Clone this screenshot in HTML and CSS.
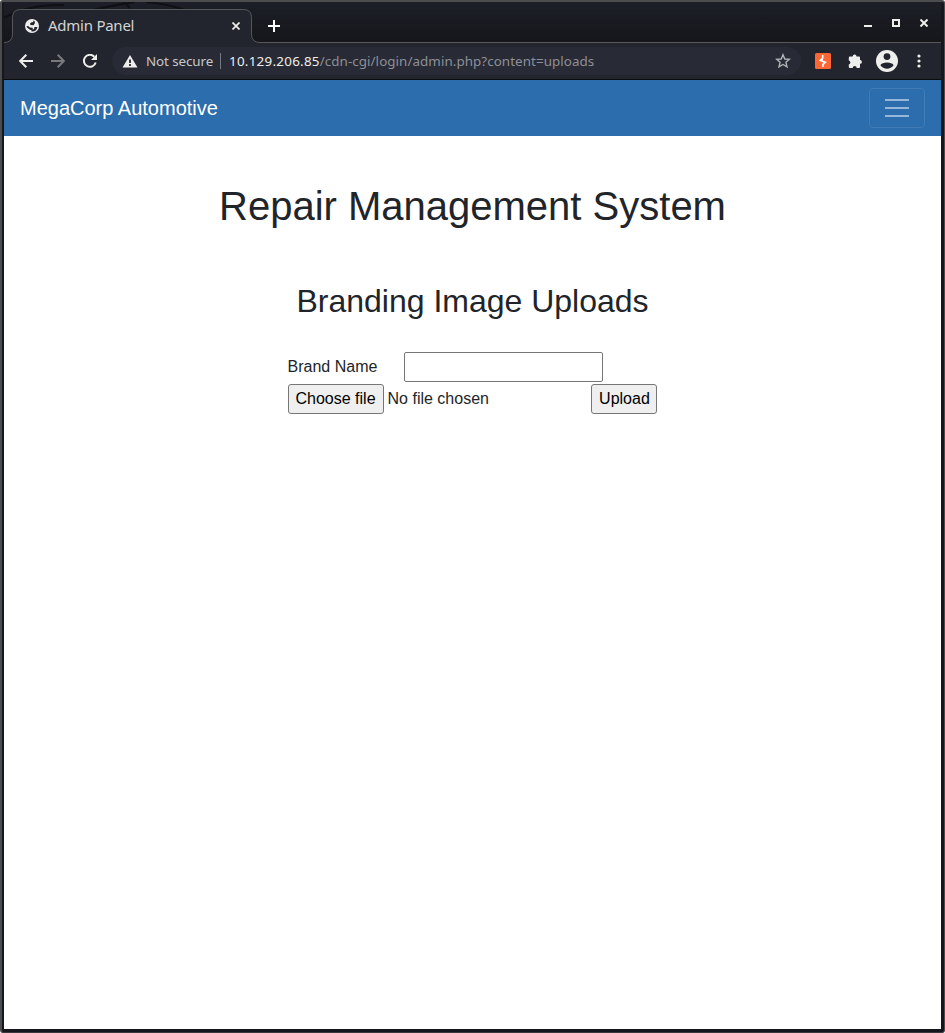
FILE: index.html
```html
<!DOCTYPE html>
<html lang="en">
<head>
<meta charset="utf-8">
<title>Admin Panel</title>
<link rel="stylesheet" href="styles.css">
</head>
<body>
<div class="window">
  <header class="tabstrip">
    <svg class="tab-shape" width="937" height="41" viewBox="0 0 937 41">
      <g fill="none" stroke="#0f1014" stroke-width="2"><path d="M0 16Q25 2 60 3M96 6L131 0M84 9L122 1M120 0L126 6M142 0Q165 2 184 9"/></g>
      <path d="M0 40.500Q8.500 40.500 8.500 32V15.500Q8.500 7.500 16.500 7.500H239.500Q247.500 7.500 247.500 15.500V32Q247.500 40.500 256 40.500H937V41H0Z" fill="#22252e"/>
      <path d="M0 40.500Q8.500 40.500 8.500 32V15.500Q8.500 7.500 16.500 7.500H239.500Q247.500 7.500 247.500 15.500V32Q247.500 40.500 256 40.500H937" fill="none" stroke="#55575a"/>
    </svg>
    <div class="tab">
      <svg class="globe" width="14" height="14" viewBox="0 0 14 14"><circle cx="7" cy="7" r="7" fill="#eeeeec"/><path d="M8.500 1.500L8.200 3L6 3.500L5 4.800L5.500 6L8.500 6.300L9.500 8H12.400A5.600 5.600 0 0 1 6.500 12.500V11.200L8 10.200L7.500 8.800L4.800 8.500L3.600 7.300L1.500 7L2 8.500L4.500 10.500L6.500 11.200L9 10L9.500 8L8.500 6.300L10 4L9.500 1.900Z" fill="#22252e"/></svg>
      <span class="tab-title">Admin Panel</span>
      <svg class="tab-close" width="8" height="8" viewBox="0 0 8 8"><path d="M.5.500L7.500 7.500M7.500.500L.5 7.500" stroke="#eeeeec" stroke-width="1.700"/></svg>
    </div>
    <svg class="new-tab" width="12" height="12" viewBox="0 0 12 12"><path d="M6 0V12M0 6H12" stroke="#fff" stroke-width="2"/></svg>
    <div class="controls">
      <svg width="8" height="8" viewBox="0 0 8 8"><path d="M0 7H8" stroke="#eeeeec" stroke-width="2"/></svg>
      <svg width="8" height="8" viewBox="0 0 8 8"><path d="M1 1H7V7H1Z" fill="none" stroke="#eeeeec" stroke-width="2"/></svg>
      <svg width="8" height="8" viewBox="0 0 8 8"><path d="M.5.500L7.500 7.500M7.500.500L.5 7.500" stroke="#eeeeec" stroke-width="2"/></svg>
    </div>
  </header>
  <div class="toolbar">
    <div class="nav-buttons">
      <svg width="14" height="14" viewBox="0 0 14 14"><path d="M14 7H1.500M7.300.800L1.200 7L7.300 13.200" fill="none" stroke="#eeeeec" stroke-width="2"/></svg>
      <svg width="14" height="14" viewBox="0 0 14 14"><path d="M0 7H12.500M6.700.800L12.800 7L6.700 13.200" fill="none" stroke="#77797d" stroke-width="2"/></svg>
      <svg width="14" height="14" viewBox="0 0 14 14"><path d="M12.700 8.500A6 6 0 1 1 11.300 2.700" fill="none" stroke="#eeeeec" stroke-width="2"/><path d="M14 0V6H8Z" fill="#eeeeec"/></svg>
    </div>
    <div class="omnibox">
      <svg class="warning" width="16" height="13" viewBox="0 0 16 13"><path d="M8 0L15.500 12.500H.5Z" fill="#eeeeec"/><path d="M8 4.500V8M8 9V11" stroke="#22252e" stroke-width="1.800"/></svg>
      <span class="insecure">Not secure</span>
      <span class="divider"></span>
      <span class="url"><b>10.129.206.85</b>/cdn-cgi/login/admin.php?content=uploads</span>
      <svg class="star" width="16" height="16" viewBox="0 0 16 16"><path d="M8 1.700L9.800 6L14.400 6.300L10.900 9.300L12 13.900L8 11.500L4 13.900L5.100 9.300L1.600 6.300L6.200 6Z" fill="none" stroke="#b2b3b6" stroke-width="1.400"/></svg>
    </div>
    <svg class="extension" width="16" height="16" viewBox="0 0 16 16"><rect width="16" height="16" rx="1.500" fill="#ff6633"/><path d="M7.700 2V5L5.200 7.500L10.300 9.300L8 11.300V14" fill="none" stroke="#fff" stroke-width="1.600"/><path d="M8 4.500V7.500L5 7.500ZM8 8.500H10.500L8 11Z" fill="#fff"/></svg>
    <svg class="puzzle" width="15" height="15" viewBox="0 0 15 15"><path d="M2 2.500H4.700A1.900 1.900 0 0 1 8.500 2.500H11Q12 2.500 12 3.500V6A1.900 1.900 0 0 1 12 9.800V13Q12 14 11 14H8.700A2 2 0 0 0 4.700 14H1.800Q.8 14 .8 13V10.400A2 2 0 0 0 .8 6.500V3.700Q.8 2.500 2 2.500Z" fill="#eeeeec"/></svg>
    <svg class="avatar" width="22" height="22" viewBox="0 0 22 22"><circle cx="11" cy="11" r="11" fill="#eeeeec"/><circle cx="11" cy="6.600" r="3.400" fill="#22252e"/><path d="M4.400 15.300C5.800 11.500 16.200 11.500 17.600 15.300C14.500 19.900 7.500 19.900 4.400 15.300Z" fill="#22252e"/></svg>
    <svg class="kebab" width="4" height="14" viewBox="0 0 4 14"><g fill="#eeeeec"><circle cx="2" cy="2" r="1.600"/><circle cx="2" cy="7" r="1.600"/><circle cx="2" cy="12" r="1.600"/></g></svg>
  </div>
  <main class="page">
    <nav class="navbar">
      <span class="brand">MegaCorp Automotive</span>
      <button class="toggler" aria-label="Toggle navigation"><svg width="30" height="30" viewBox="0 0 30 30"><path d="M3 7H27M3 15H27M3 23H27" stroke="#fff" stroke-opacity=".5" stroke-width="2"/></svg></button>
    </nav>
    <h1>Repair Management System</h1>
    <h2>Branding Image Uploads</h2>
    <form class="upload-form">
      <div class="row"><label for="brand">Brand Name</label><input id="brand" class="text-input" type="text"></div>
      <div class="row"><button class="btn choose" type="button">Choose file</button><span class="file-name">No file chosen</span><button class="btn upload" type="button">Upload</button></div>
    </form>
  </main>
</div>
</body>
</html>
```
FILE: styles.css
```css
* { box-sizing: border-box; }
body { margin: 0; background: #fff; font-family: "Liberation Sans", Arial, sans-serif; }
svg { display: block; flex: none; }
.window {
  height: 1033px;
  display: flex;
  flex-direction: column;
  background: #16171d;
  border: 2px solid #4b4c4d;
  border-right-width: 1px;
  border-bottom: 1px solid #3a383d;
  border-radius: 3px;
  padding: 0 3px 3px 2px;
}
.tabstrip {
  position: relative;
  height: 41px;
  display: flex;
  align-items: flex-start;
  background: linear-gradient(#1c1f27, #15161a);
  font-family: "Noto Sans", sans-serif;
}
.tab-shape { position: absolute; left: 0; top: 0; }
.tab { position: relative; width: 240px; height: 33px; margin: 7px 0 0 8px; padding: 0 12px 0 13px; display: flex; align-items: center; }
.tab-title { margin-left: 9px; padding-bottom: 2px; font-size: 15px; line-height: 20px; letter-spacing: -.25px; color: #d3d4d5; white-space: nowrap; }
.tab-close { margin-left: auto; }
.new-tab { position: relative; margin: 18px 0 0 16px; }
.controls { margin: 17px 13px 0 auto; display: flex; gap: 20px; position: relative; }
.toolbar { height: 37px; display: flex; align-items: center; background: #22252e; border-bottom: 1px solid #0b0c10; font-family: "Noto Sans", sans-serif; }
.nav-buttons { display: flex; gap: 18px; margin-left: 15px; }
.omnibox { width: 689px; height: 28px; margin-left: 15px; border-radius: 14px; background: #282a35; display: flex; align-items: center; padding: 0 10px 0 10px; font-size: 13.4px; line-height: 20px; color: #8e9096; white-space: nowrap; }
.insecure { margin-left: 8px; width: 67px; letter-spacing: -.1px; color: #c7c8ca; }
.divider { width: 1px; height: 16px; margin: 0 8px 0 7px; background: #777980; }
.url { letter-spacing: .06px; }
.url b { font-weight: 400; letter-spacing: .26px; color: #eeeeec; }
.star { margin-left: auto; }
.extension { margin-left: 14px; }
.puzzle { margin-left: 17px; }
.avatar { margin-left: 13px; }
.kebab { margin-left: 19px; }
.page { flex: 1; background: #fff; color: #212529; line-height: 24px; }
.navbar { height: 56px; padding: 0 16px; display: flex; align-items: center; justify-content: space-between; background: #2b6dad; }
.brand { font-size: 20px; line-height: 30px; color: #fff; }
.toggler { width: 56px; height: 40px; padding: 0; border: 1px solid #407bb5; border-radius: 4px; background: transparent; display: flex; align-items: center; justify-content: center; }
h1, h2 { margin: 0; font-weight: 400; text-align: center; }
h1 { padding-top: 46px; font-size: 40px; line-height: 48px; }
h2 { padding-top: 52px; font-size: 32px; line-height: 38px; }
.upload-form { width: 369.9px; margin: 32px auto 0; display: flex; flex-direction: column; gap: 2px; font-size: 16px; }
.row { height: 30px; display: flex; align-items: center; }
.row label { width: 116px; }
.text-input { width: 199px; height: 30px; margin: 0; border: 1px solid #767676; border-radius: 2px; background: #fff; }
.btn { height: 30px; padding: 0; border: 1px solid #767676; border-radius: 3px; background: #efefef; color: #000; font: 16px "Liberation Sans", Arial, sans-serif; }
.choose { width: 96px; }
.file-name { margin-left: 4px; }
.upload { width: 66px; margin-left: auto; }
```
